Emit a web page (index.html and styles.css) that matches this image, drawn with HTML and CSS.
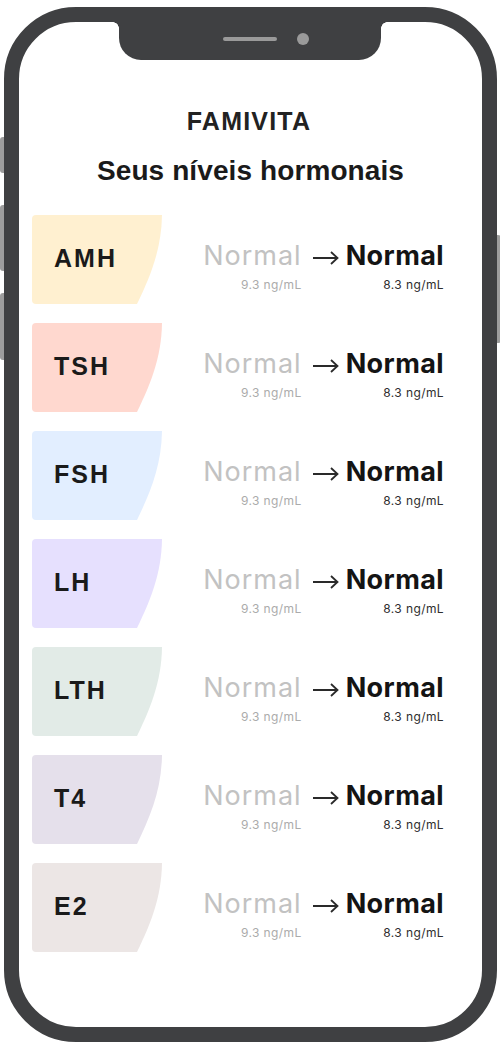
FILE: index.html
```html
<!DOCTYPE html>
<html lang="pt">
<head>
<meta charset="utf-8">
<title>Famivita</title>
<link rel="stylesheet" href="styles.css">
</head>
<body>
<div class="phone">
  <span class="btn btn-l1"></span>
  <span class="btn btn-l2"></span>
  <span class="btn btn-l3"></span>
  <span class="btn btn-r"></span>
  <div class="notch">
    <span class="speaker"></span>
    <span class="camera"></span>
  </div>
  <div class="screen">
    <h1 class="brand">FAMIVITA</h1>
    <h2 class="heading">Seus níveis hormonais</h2>
    <ul class="list">
      <li class="row">
        <div class="card c-amh">AMH</div>
        <div class="values">
          <div class="val old"><div class="word">Normal</div><div class="unit">9.3 ng/mL</div></div>
          <svg class="arrow" viewBox="0 0 26 14" width="26" height="14"><path d="M0 7H24.5M18 1L24.5 7L18 13" fill="none" stroke="#2a2a2a" stroke-width="1.8"/></svg>
          <div class="val new"><div class="word">Normal</div><div class="unit">8.3 ng/mL</div></div>
        </div>
      </li>
      <li class="row">
        <div class="card c-tsh">TSH</div>
        <div class="values">
          <div class="val old"><div class="word">Normal</div><div class="unit">9.3 ng/mL</div></div>
          <svg class="arrow" viewBox="0 0 26 14" width="26" height="14"><path d="M0 7H24.5M18 1L24.5 7L18 13" fill="none" stroke="#2a2a2a" stroke-width="1.8"/></svg>
          <div class="val new"><div class="word">Normal</div><div class="unit">8.3 ng/mL</div></div>
        </div>
      </li>
      <li class="row">
        <div class="card c-fsh">FSH</div>
        <div class="values">
          <div class="val old"><div class="word">Normal</div><div class="unit">9.3 ng/mL</div></div>
          <svg class="arrow" viewBox="0 0 26 14" width="26" height="14"><path d="M0 7H24.5M18 1L24.5 7L18 13" fill="none" stroke="#2a2a2a" stroke-width="1.8"/></svg>
          <div class="val new"><div class="word">Normal</div><div class="unit">8.3 ng/mL</div></div>
        </div>
      </li>
      <li class="row">
        <div class="card c-lh">LH</div>
        <div class="values">
          <div class="val old"><div class="word">Normal</div><div class="unit">9.3 ng/mL</div></div>
          <svg class="arrow" viewBox="0 0 26 14" width="26" height="14"><path d="M0 7H24.5M18 1L24.5 7L18 13" fill="none" stroke="#2a2a2a" stroke-width="1.8"/></svg>
          <div class="val new"><div class="word">Normal</div><div class="unit">8.3 ng/mL</div></div>
        </div>
      </li>
      <li class="row">
        <div class="card c-lth">LTH</div>
        <div class="values">
          <div class="val old"><div class="word">Normal</div><div class="unit">9.3 ng/mL</div></div>
          <svg class="arrow" viewBox="0 0 26 14" width="26" height="14"><path d="M0 7H24.5M18 1L24.5 7L18 13" fill="none" stroke="#2a2a2a" stroke-width="1.8"/></svg>
          <div class="val new"><div class="word">Normal</div><div class="unit">8.3 ng/mL</div></div>
        </div>
      </li>
      <li class="row">
        <div class="card c-t4">T4</div>
        <div class="values">
          <div class="val old"><div class="word">Normal</div><div class="unit">9.3 ng/mL</div></div>
          <svg class="arrow" viewBox="0 0 26 14" width="26" height="14"><path d="M0 7H24.5M18 1L24.5 7L18 13" fill="none" stroke="#2a2a2a" stroke-width="1.8"/></svg>
          <div class="val new"><div class="word">Normal</div><div class="unit">8.3 ng/mL</div></div>
        </div>
      </li>
      <li class="row">
        <div class="card c-e2">E2</div>
        <div class="values">
          <div class="val old"><div class="word">Normal</div><div class="unit">9.3 ng/mL</div></div>
          <svg class="arrow" viewBox="0 0 26 14" width="26" height="14"><path d="M0 7H24.5M18 1L24.5 7L18 13" fill="none" stroke="#2a2a2a" stroke-width="1.8"/></svg>
          <div class="val new"><div class="word">Normal</div><div class="unit">8.3 ng/mL</div></div>
        </div>
      </li>
    </ul>
  </div>
</div>
</body>
</html>
```

FILE: styles.css
```css
* { box-sizing: border-box; }
html, body { margin: 0; padding: 0; background: #fff; }
body { font-family: "Liberation Sans", Arial, sans-serif; }

.phone {
  position: relative;
  width: 493px;
  height: 1035px;
  margin: 7px 0 0 4px;
  border: 15px solid #3f4042;
  border-radius: 72px;
  background: #fff;
}

.btn {
  position: absolute;
  width: 4px;
  background: #9d9d9d;
}
.btn-l1, .btn-l2, .btn-l3 { left: -19px; border-radius: 3px 0 0 3px; }
.btn-l1 { top: 115px; height: 36px; }
.btn-l2 { top: 183px; height: 66px; }
.btn-l3 { top: 271px; height: 67px; }
.btn-r { right: -19px; top: 213px; height: 108px; border-radius: 0 3px 3px 0; }

.notch {
  position: absolute;
  top: 0;
  left: 100px;
  width: 262px;
  height: 38px;
  background: #3f4042;
  border-radius: 0 0 22px 22px;
  display: flex;
  align-items: center;
  gap: 20px;
  padding: 0 0 4px 104px;
}
.notch::before, .notch::after {
  content: "";
  position: absolute;
  top: 0;
  width: 6px;
  height: 6px;
}
.notch::before {
  left: -6px;
  background: radial-gradient(circle at 0 100%, transparent 5.5px, #3f4042 6px);
}
.notch::after {
  right: -6px;
  background: radial-gradient(circle at 100% 100%, transparent 5.5px, #3f4042 6px);
}
.speaker {
  width: 54px;
  height: 4px;
  border-radius: 2px;
  background: #9a9a9a;
}
.camera {
  width: 12px;
  height: 12px;
  border-radius: 50%;
  background: #9a9a9a;
}

.screen {
  padding: 85px 38px 0 13px;
}

.brand {
  margin: 0;
  text-align: center;
  font-size: 25px;
  line-height: 29px;
  font-weight: 700;
  letter-spacing: 1.2px;
  color: #222;
  padding-left: 22px;
}
.heading {
  margin: 19px 0 0;
  text-align: center;
  font-size: 28px;
  line-height: 32px;
  font-weight: 700;
  letter-spacing: 0.1px;
  color: #1a1a1a;
  padding-left: 25px;
}

.list {
  list-style: none;
  margin: 28px 0 0;
  padding: 0;
  display: flex;
  flex-direction: column;
  gap: 19px;
}
.row {
  display: flex;
  height: 89px;
}
.card {
  width: 130px;
  height: 89px;
  flex: none;
  display: flex;
  align-items: center;
  padding: 0 0 2px 22px;
  font-size: 25px;
  font-weight: 700;
  letter-spacing: 2px;
  color: #1a1a1a;
  clip-path: path("M4 0 H130 C129.5 35 118 62 105 89 H4 Q0 89 0 85 V4 Q0 0 4 0 Z");
}
.c-amh { background: #fff0d0; }
.c-tsh { background: #ffd8cf; }
.c-fsh { background: #e2eeff; }
.c-lh  { background: #e6e0fe; }
.c-lth { background: #e2ebe7; }
.c-t4  { background: #e5e0eb; }
.c-e2  { background: #ece6e5; }

.values {
  flex: 1;
  display: flex;
  justify-content: flex-end;
  align-items: flex-start;
  padding-top: 27px;
  font-family: Inter, "Liberation Sans", sans-serif;
}
.val { text-align: right; }
.word {
  font-size: 27px;
  line-height: 27px;
}
.unit {
  margin-top: 9px;
  font-size: 12px;
  line-height: 14px;
  letter-spacing: 0.4px;
}
.old .word { color: #c2c2c2; font-weight: 400; letter-spacing: 1px; }
.old .unit { color: #ababab; }
.new .word { color: #141414; font-weight: 700; letter-spacing: 0.4px; }
.new .unit { color: #2e2e2e; }
.arrow {
  flex: none;
  margin: 9px 7px 0 11px;
}
```
